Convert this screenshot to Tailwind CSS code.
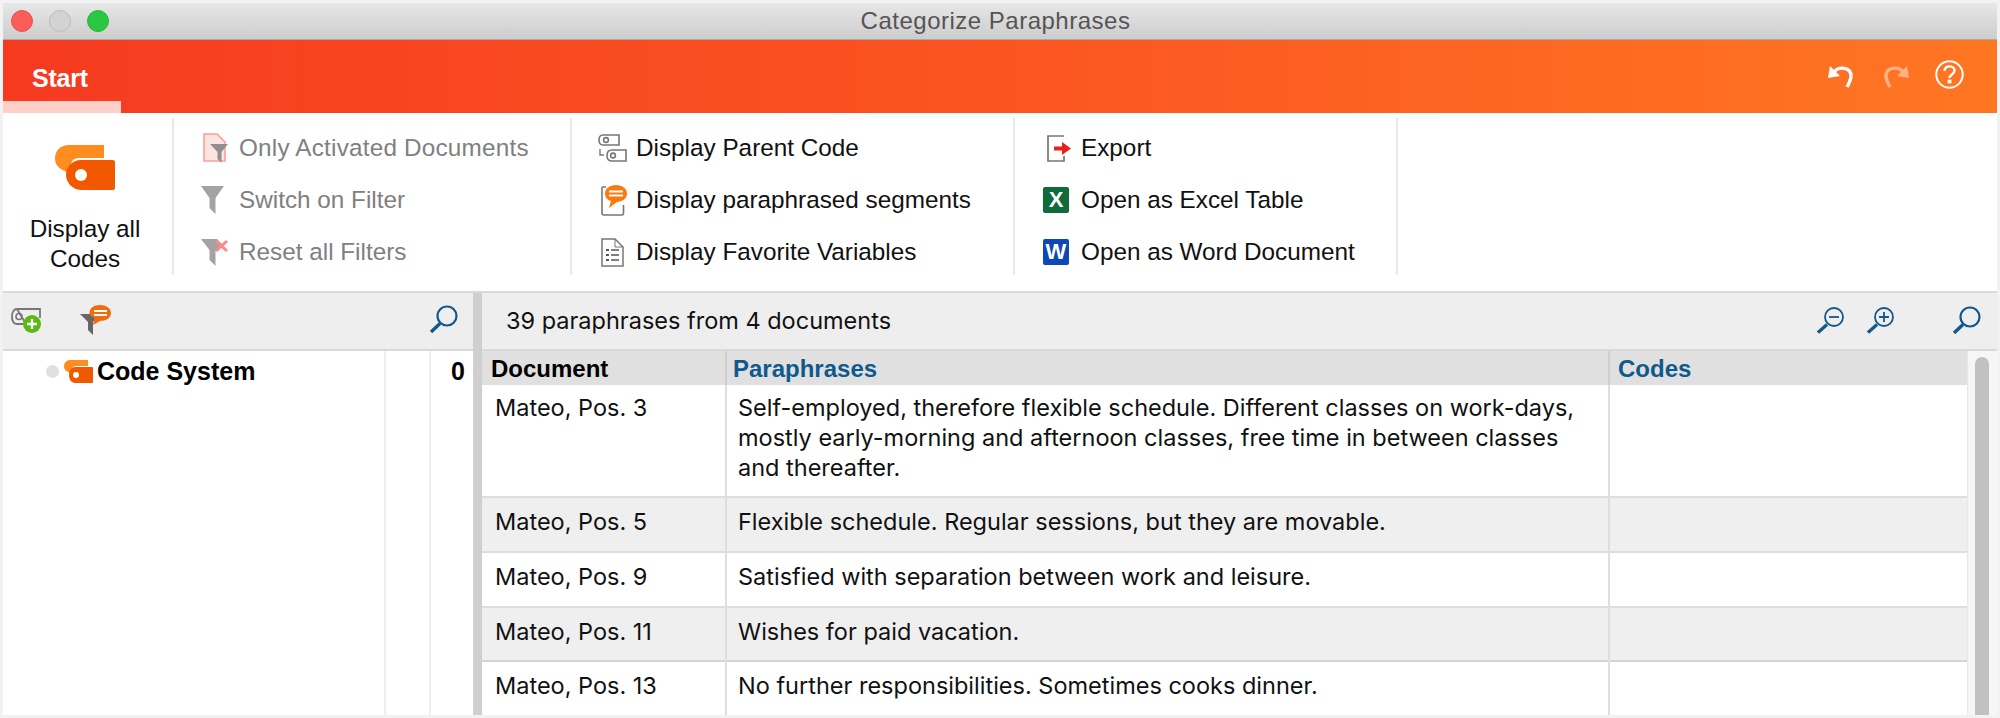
<!DOCTYPE html>
<html lang="en">
<head>
  <meta charset="UTF-8" />
  <title>Categorize Paraphrases</title>
  <script src="https://cdn.jsdelivr.net/npm/@tailwindcss/browser@4"></script>
</head>
<body class="bg-[#f1f2f2] h-[718px] overflow-hidden p-[3px] font-['Liberation_Sans',sans-serif] text-[#111]">
  <div class="h-[712px] flex flex-col overflow-hidden bg-white">

    <!-- title bar -->
    <div class="h-[37px] shrink-0 flex items-center bg-gradient-to-b from-[#e7e7e7] to-[#cdcdcd] border-b border-[#a9a9a9] relative">
      <div class="flex gap-[16px] pl-[8px]">
        <span class="w-[22px] h-[22px] rounded-full bg-[#fc5c5a] border border-[#e5504e]"></span>
        <span class="w-[22px] h-[22px] rounded-full bg-[#d3d3d3] border border-[#bcbcbc]"></span>
        <span class="w-[22px] h-[22px] rounded-full bg-[#2ac840] border border-[#25b83a]"></span>
      </div>
      <div class="flex-1 text-center text-[24px] tracking-[0.5px] text-[#555] pr-[115px]">Categorize Paraphrases</div>
    </div>

    <!-- ribbon tab bar -->
    <div class="h-[73px] shrink-0 flex items-stretch bg-gradient-to-r from-[#f63a20] via-[#fb5421] to-[#ff7622]">
      <div class="w-[118px] pl-[29px] pt-[25px] border-b-[12px] border-[#ffd0c8] text-white font-bold text-[25px] leading-[26px] tracking-[-0.2px]">Start</div>
      <div class="flex-1 flex items-center justify-end pr-[33px] pb-[5px]">
        <svg class="w-[25px] h-[23px] mt-[4px]" viewBox="0 0 25 23" fill="none"><path d="M0 13 L2 1 L12 11 Z" fill="#fff"/><path d="M6 7 C11 1 23 2 23 11 C23 15 21 18 19 22" stroke="#fff" stroke-width="3.4"/></svg>
        <svg class="w-[25px] h-[23px] mt-[4px] ml-[31px] opacity-45" viewBox="0 0 25 23" fill="none"><path d="M25 13 L23 1 L13 11 Z" fill="#fff"/><path d="M19 7 C14 1 2 2 2 11 C2 15 4 18 6 22" stroke="#fff" stroke-width="3.4"/></svg>
        <svg class="w-[29px] h-[29px] ml-[26px]" viewBox="0 0 29 29" fill="none"><circle cx="14.5" cy="14.5" r="13.2" stroke="#fff" stroke-width="2"/><path d="M9.5 11 C9.5 4.8 19.5 5 19.5 10.8 C19.5 14.5 14.5 14.5 14.5 18" stroke="#fff" stroke-width="2.4"/><rect x="12.6" y="19.6" width="3.8" height="3.8" fill="#fff"/></svg>
      </div>
    </div>

    <!-- ribbon -->
    <div class="h-[180px] shrink-0 flex items-start pt-[5px] border-b-2 border-[#d9d9d9] text-[24.3px]">
      <div class="w-[171px] h-[157px] shrink-0 border-r-2 border-[#e8e8e8] flex flex-col items-center">
        <svg class="w-[60px] h-[46px] mt-[27px] mr-[6px]" viewBox="0 0 60 46">
          <path d="M14 0 H49 V13 H24 C17 13 15 18 15 28 C8 26 0 22 0 14 C0 5 6 0 14 0 Z" fill="#ff8c1f"/>
          <path d="M26 15 H58 C59 15 60 16 60 17 V43 C60 44 59 45 58 45 H27 C17 45 11 37 11 30 C11 22 17 15 26 15 Z" fill="#f25800"/>
          <circle cx="26" cy="30" r="6" fill="#fff"/>
        </svg>
        <div class="mt-[23px] leading-[30px] text-center mr-[5px]">Display all<br>Codes</div>
      </div>

      <div class="w-[398px] h-[157px] shrink-0 border-r-2 border-[#e8e8e8] pl-[27px] flex flex-col text-[#808080]">
        <div class="h-[52px] shrink-0 mt-[4px] flex items-center gap-[11px] pl-[2px]">
          <svg class="w-[25px] h-[30px] shrink-0" viewBox="0 0 25 30">
            <path d="M1 1 H14 L22 9 V28 H1 Z" fill="#ffe3e0" stroke="#fb9f98" stroke-width="1.6"/>
            <path d="M7 11 H25 L18.5 19 V30 L14.5 26 V19 Z" fill="#909090"/>
          </svg>
          <span class="tracking-[0.2px]">Only Activated Documents</span>
        </div>
        <div class="h-[52px] shrink-0 flex items-center gap-[15px]">
          <svg class="w-[23px] h-[28px] shrink-0" viewBox="0 0 23 28"><path d="M0 0 H23 L14.5 12 V28 L8.5 22 V12 Z" fill="#a3a3a3"/></svg>
          <span>Switch on Filter</span>
        </div>
        <div class="h-[52px] shrink-0 flex items-center gap-[10px]">
          <svg class="w-[28px] h-[28px] shrink-0" viewBox="0 0 28 28"><path d="M0 1 H16 L21 6 L14.5 13 V28 L8.5 22 V12 Z" fill="#a3a3a3"/><path d="M15 3 L26 13 M26 3 L15 13" stroke="#f98a84" stroke-width="3"/></svg>
          <span>Reset all Filters</span>
        </div>
      </div>

      <div class="w-[443px] h-[157px] shrink-0 border-r-2 border-[#e8e8e8] pl-[26px] flex flex-col">
        <div class="h-[52px] shrink-0 mt-[4px] flex items-center gap-[9px]">
          <svg class="w-[29px] h-[28px] shrink-0" viewBox="0 0 29 28" fill="none" stroke="#777" stroke-width="1.6">
            <path d="M5 1 H21 V11 H5 C2 11 1 9 1 6 C1 3 2 1 5 1 Z"/><circle cx="8" cy="6" r="2.4"/>
            <path d="M14 16 H28 V27 H14 C10 27 9 24 9 21.500 C9 18 11 16 14 16 Z"/><circle cx="15" cy="21.500" r="2.400"/>
            <path d="M2 15 V21 H6" stroke-width="1.4"/>
          </svg>
          <span>Display Parent Code</span>
        </div>
        <div class="h-[52px] shrink-0 flex items-center gap-[9px] pl-[3px]">
          <svg class="w-[26px] h-[31px] shrink-0" viewBox="0 0 26 31" fill="none">
            <path d="M5 2 H2 C1 2 1 3 1 3 V28 C1 29 2 30 3 30 H21 C22 30 22.500 29 22.500 28 V20" stroke="#777" stroke-width="1.600"/>
            <path d="M15 0 C21 0 26 3.500 26 8.500 C26 14 21 16.500 16 17 L8 23 L10 16 C6 15 4 12 4 8.500 C4 3.500 9 0 15 0 Z" fill="#fb7a0d"/>
            <path d="M8 6.500 H22 M8 10.500 H22" stroke="#fff" stroke-width="1.900"/>
          </svg>
          <span>Display paraphrased segments</span>
        </div>
        <div class="h-[52px] shrink-0 flex items-center gap-[12px] pl-[3px]">
          <svg class="w-[23px] h-[29px] shrink-0" viewBox="0 0 23 29" fill="none" stroke="#777" stroke-width="1.500">
            <path d="M1 1 H14 L22 9 V28 H1 Z"/><path d="M14 1 V9 H22" stroke-width="1"/>
            <path d="M5 12 H8 M5 17 H8 M5 22 H8" stroke-width="2.200" stroke="#555"/><path d="M10 12 H18 M10 17 H18 M10 22 H18" stroke="#555"/>
          </svg>
          <span>Display Favorite Variables</span>
        </div>
      </div>

      <div class="w-[383px] h-[157px] shrink-0 border-r-2 border-[#e8e8e8] pl-[28px] flex flex-col">
        <div class="h-[52px] shrink-0 mt-[4px] flex items-center gap-[9px] pl-[4px]">
          <svg class="w-[25px] h-[27px] shrink-0" viewBox="0 0 25 27" fill="none">
            <path d="M17 1 H1 V26 H17 V21" stroke="#777" stroke-width="1.700"/>
            <path d="M7 11.500 H15 V7 L24 13.500 L15 20 V15.500 H7 Z" fill="#e7211c"/>
          </svg>
          <span>Export</span>
        </div>
        <div class="h-[52px] shrink-0 flex items-center gap-[12px]">
          <span class="w-[26px] h-[26px] shrink-0 bg-[#0f6b3a] rounded-[2px] text-white font-bold text-[22px] leading-[26px] text-center">X</span>
          <span>Open as Excel Table</span>
        </div>
        <div class="h-[52px] shrink-0 flex items-center gap-[12px]">
          <span class="w-[26px] h-[26px] shrink-0 bg-[#0e47b8] rounded-[2px] text-white font-bold text-[22px] leading-[26px] text-center">W</span>
          <span>Open as Word Document</span>
        </div>
      </div>
    </div>

    <!-- lower area -->
    <div class="flex-1 min-h-0 flex">
      <!-- left: code system -->
      <div class="w-[470px] shrink-0 flex flex-col">
        <div class="h-[58px] shrink-0 flex items-center bg-[#eeeeee] border-b-2 border-[#d9d9d9] pb-[3px]">
          <svg class="w-[31px] h-[26px] ml-[8px]" viewBox="0 0 31 26" fill="none">
            <path d="M6 2 H29 V11 M15 17 H6 C2 17 1 13 1 9.500 C1 5 3 2 6 2 Z" stroke="#777" stroke-width="1.800"/>
            <circle cx="8" cy="9.500" r="3" stroke="#777" stroke-width="1.600"/>
            <circle cx="21" cy="17" r="9" fill="#5cb812"/>
            <path d="M21 12 V22 M16 17 H26" stroke="#fff" stroke-width="2.400"/>
          </svg>
          <svg class="w-[31px] h-[30px] ml-[38px]" viewBox="0 0 31 30">
            <path d="M0 9 H19 L13 17 V30 L8 25 V17 Z" fill="#666"/>
            <path d="M20 0 C26 0 31 3 31 8 C31 13 26 16 20 16 L13 20 L14.500 13 C11 12 9.500 10 9.500 8 C9.500 3 14 0 20 0 Z" fill="#f36a0c"/>
            <path d="M14 6 H27 M14 10 H27" stroke="#fff" stroke-width="1.800"/>
          </svg>
          <svg class="w-[29px] h-[29px] ml-[318px]" viewBox="0 0 29 29" fill="none"><circle cx="18" cy="11" r="9.500" stroke="#11598c" stroke-width="2.200"/><path d="M11 18.500 L2 27" stroke="#11598c" stroke-width="3.400"/></svg>
        </div>
        <div class="flex-1 flex">
          <div class="w-[383px] shrink-0 border-r-2 border-[#efefef] pl-[43px] pt-[8px]">
            <div class="flex items-center gap-[5px]">
              <span class="w-[13px] h-[13px] rounded-full bg-[#e0e0e0]"></span>
              <svg class="w-[29px] h-[23px] -mr-[1px]" viewBox="0 0 29 23">
                <path d="M6 0 H24 V6 H12 C9 6 7 8 7 13 C3 12 0 10 0 6.500 C0 2.500 3 0 6 0 Z" fill="#ff8c1f"/>
                <path d="M11 7 H28 C29 7 29 8 29 8 V22 C29 23 28 23 28 23 H11 C7 23 5 19 5 15 C5 11 7 7 11 7 Z" fill="#f25800"/>
                <circle cx="12" cy="15" r="3" fill="#fff"/>
              </svg>
              <span class="font-bold text-[25px] leading-[24px] text-black">Code System</span>
            </div>
          </div>
          <div class="w-[45px] shrink-0 border-r-2 border-[#efefef]"></div>
          <div class="flex-1 pt-[8px] pr-[8px] text-right font-bold text-[25px] leading-[24px] text-black">0</div>
        </div>
      </div>

      <!-- splitter -->
      <div class="w-[9px] shrink-0 bg-[#cfcfcf]"></div>

      <!-- right: table -->
      <div class="flex-1 min-w-0 flex flex-col">
        <div class="h-[58px] shrink-0 flex items-center bg-[#eeeeee] border-b-2 border-[#d9d9d9] pb-[1px] font-['Inter',sans-serif] text-[23.5px]">
          <span class="pl-[24px] flex-1">39 paraphrases from 4 documents</span>
          <svg class="w-[27px] h-[27px]" viewBox="0 0 27 27" fill="none"><circle cx="17" cy="10" r="9" stroke="#11598c" stroke-width="1.800"/><path d="M12 10 H22" stroke="#11598c" stroke-width="1.800"/><path d="M10 17.500 L1 25.500" stroke="#11598c" stroke-width="3.200"/></svg>
          <svg class="w-[27px] h-[27px] ml-[23px]" viewBox="0 0 27 27" fill="none"><circle cx="17" cy="10" r="9" stroke="#11598c" stroke-width="1.800"/><path d="M12 10 H22 M17 5 V15" stroke="#11598c" stroke-width="1.800"/><path d="M10 17.500 L1 25.500" stroke="#11598c" stroke-width="3.200"/></svg>
          <svg class="w-[29px] h-[29px] ml-[58px] mr-[16px]" viewBox="0 0 29 29" fill="none"><circle cx="18" cy="11" r="9.500" stroke="#11598c" stroke-width="2.200"/><path d="M11 18.500 L2 27" stroke="#11598c" stroke-width="3.400"/></svg>
        </div>
        <div class="flex-1 min-h-0 flex overflow-hidden">
          <table class="w-[1485px] shrink-0 table-fixed border-collapse font-['Inter',sans-serif] text-[23.5px] leading-[30px] self-start">
            <colgroup><col class="w-[244px]"><col class="w-[883px]"><col></colgroup>
            <thead>
              <tr class="h-[34px] bg-[#e0e0e0] text-left text-[24px] leading-[26px] font-['Liberation_Sans',sans-serif] font-bold">
                <th class="pl-[9px] pt-[1px] font-bold text-black border-r-2 border-[#d0d0d0]">Document</th>
                <th class="pl-[6px] pt-[1px] font-bold text-[#0f5a8c] border-r-2 border-[#d0d0d0]">Paraphrases</th>
                <th class="pl-[8px] pt-[1px] font-bold text-[#0f5a8c]">Codes</th>
              </tr>
            </thead>
            <tbody class="align-top">
              <tr class="h-[112px] border-b-2 border-[#dedede]">
                <td class="pl-[13px] pt-[8px] border-r-2 border-[#dedede]">Mateo, Pos. 3</td>
                <td class="pl-[11px] pt-[8px] border-r-2 border-[#dedede]">Self-employed, therefore flexible schedule. Different classes on work-days,<br>mostly early-morning and afternoon classes, free time in between classes<br>and thereafter.</td>
                <td></td>
              </tr>
              <tr class="h-[55px] bg-[#efefef] border-b-2 border-[#dedede]">
                <td class="pl-[13px] pt-[9px] border-r-2 border-[#dedede]">Mateo, Pos. 5</td>
                <td class="pl-[11px] pt-[9px] border-r-2 border-[#dedede]">Flexible schedule. Regular sessions, but they are movable.</td>
                <td></td>
              </tr>
              <tr class="h-[55px] border-b-2 border-[#dedede]">
                <td class="pl-[13px] pt-[9px] border-r-2 border-[#dedede]">Mateo, Pos. 9</td>
                <td class="pl-[11px] pt-[9px] border-r-2 border-[#dedede]">Satisfied with separation between work and leisure.</td>
                <td></td>
              </tr>
              <tr class="h-[54px] bg-[#efefef] border-b-2 border-[#d4d4d4]">
                <td class="pl-[13px] pt-[9px] border-r-2 border-[#dedede]">Mateo, Pos. 11</td>
                <td class="pl-[11px] pt-[9px] border-r-2 border-[#dedede]">Wishes for paid vacation.</td>
                <td></td>
              </tr>
              <tr class="h-[54px]">
                <td class="pl-[13px] pt-[9px] border-r-2 border-[#dedede]">Mateo, Pos. 13</td>
                <td class="pl-[11px] pt-[9px] border-r-2 border-[#dedede]">No further responsibilities. Sometimes cooks dinner.</td>
                <td></td>
              </tr>
            </tbody>
          </table>
          <div class="flex-1 bg-[#f6f6f6] border-l border-[#e8e8e8] pl-[7px] pt-[6px]">
            <div class="w-[14px] h-full bg-[#c1c1c1] rounded-t-full"></div>
          </div>
        </div>
      </div>
    </div>
  </div>
</body>
</html>
